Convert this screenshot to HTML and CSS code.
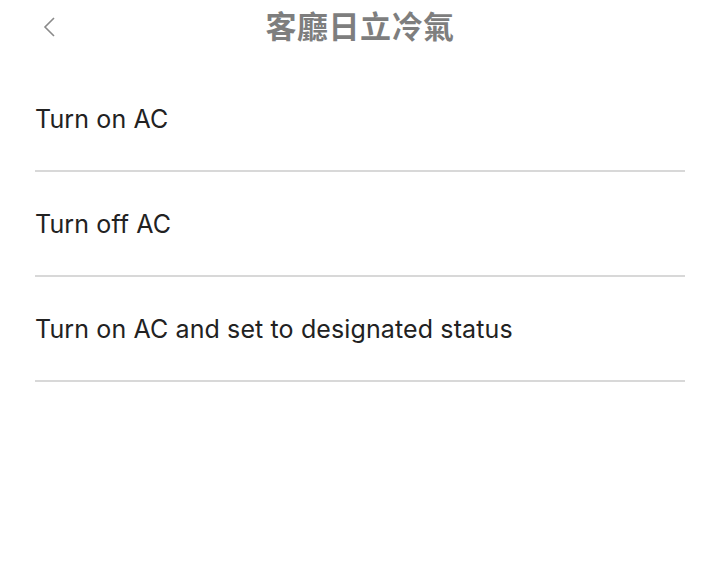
FILE: index.html
```html
<!DOCTYPE html>
<html lang="zh-Hant">
<head>
<meta charset="utf-8">
<title>客廳日立冷氣</title>
<link rel="stylesheet" href="styles.css">
</head>
<body>
<header class="nav">
  <button class="back" aria-label="Back">
    <svg width="14" height="22" viewBox="0 0 14 22"><path d="M12 2 L3 11 L12 20" fill="none" stroke="#8a8a8a" stroke-width="1.6"/></svg>
  </button>
  <h1 class="title">客廳日立冷氣</h1>
</header>
<ul class="list">
  <li class="item">Turn on AC</li>
  <li class="item">Turn off AC</li>
  <li class="item">Turn on AC and set to designated status</li>
</ul>
</body>
</html>
```
FILE: styles.css
```css
html, body {
  margin: 0;
  padding: 0;
  background: #ffffff;
  font-family: "Inter", "Noto Sans CJK TC", sans-serif;
}
.nav {
  position: relative;
  height: 48px;
  display: flex;
  align-items: center;
  justify-content: center;
}
.back {
  position: absolute;
  left: 42px;
  top: 16px;
  padding: 0;
  border: 0;
  background: none;
  display: flex;
}
.title {
  margin: 0;
  font-family: "Noto Sans CJK TC", sans-serif;
  font-size: 31px;
  font-weight: 700;
  color: #7e7e7e;
  letter-spacing: 0.5px;
}
.list {
  list-style: none;
  margin: 19px 35px 0;
  padding: 0;
}
.item {
  height: 103px;
  display: flex;
  align-items: center;
  border-bottom: 2px solid #d8d8d8;
  font-size: 25px;
  font-weight: 400;
  letter-spacing: 0.12px;
  color: #222222;
}
```
